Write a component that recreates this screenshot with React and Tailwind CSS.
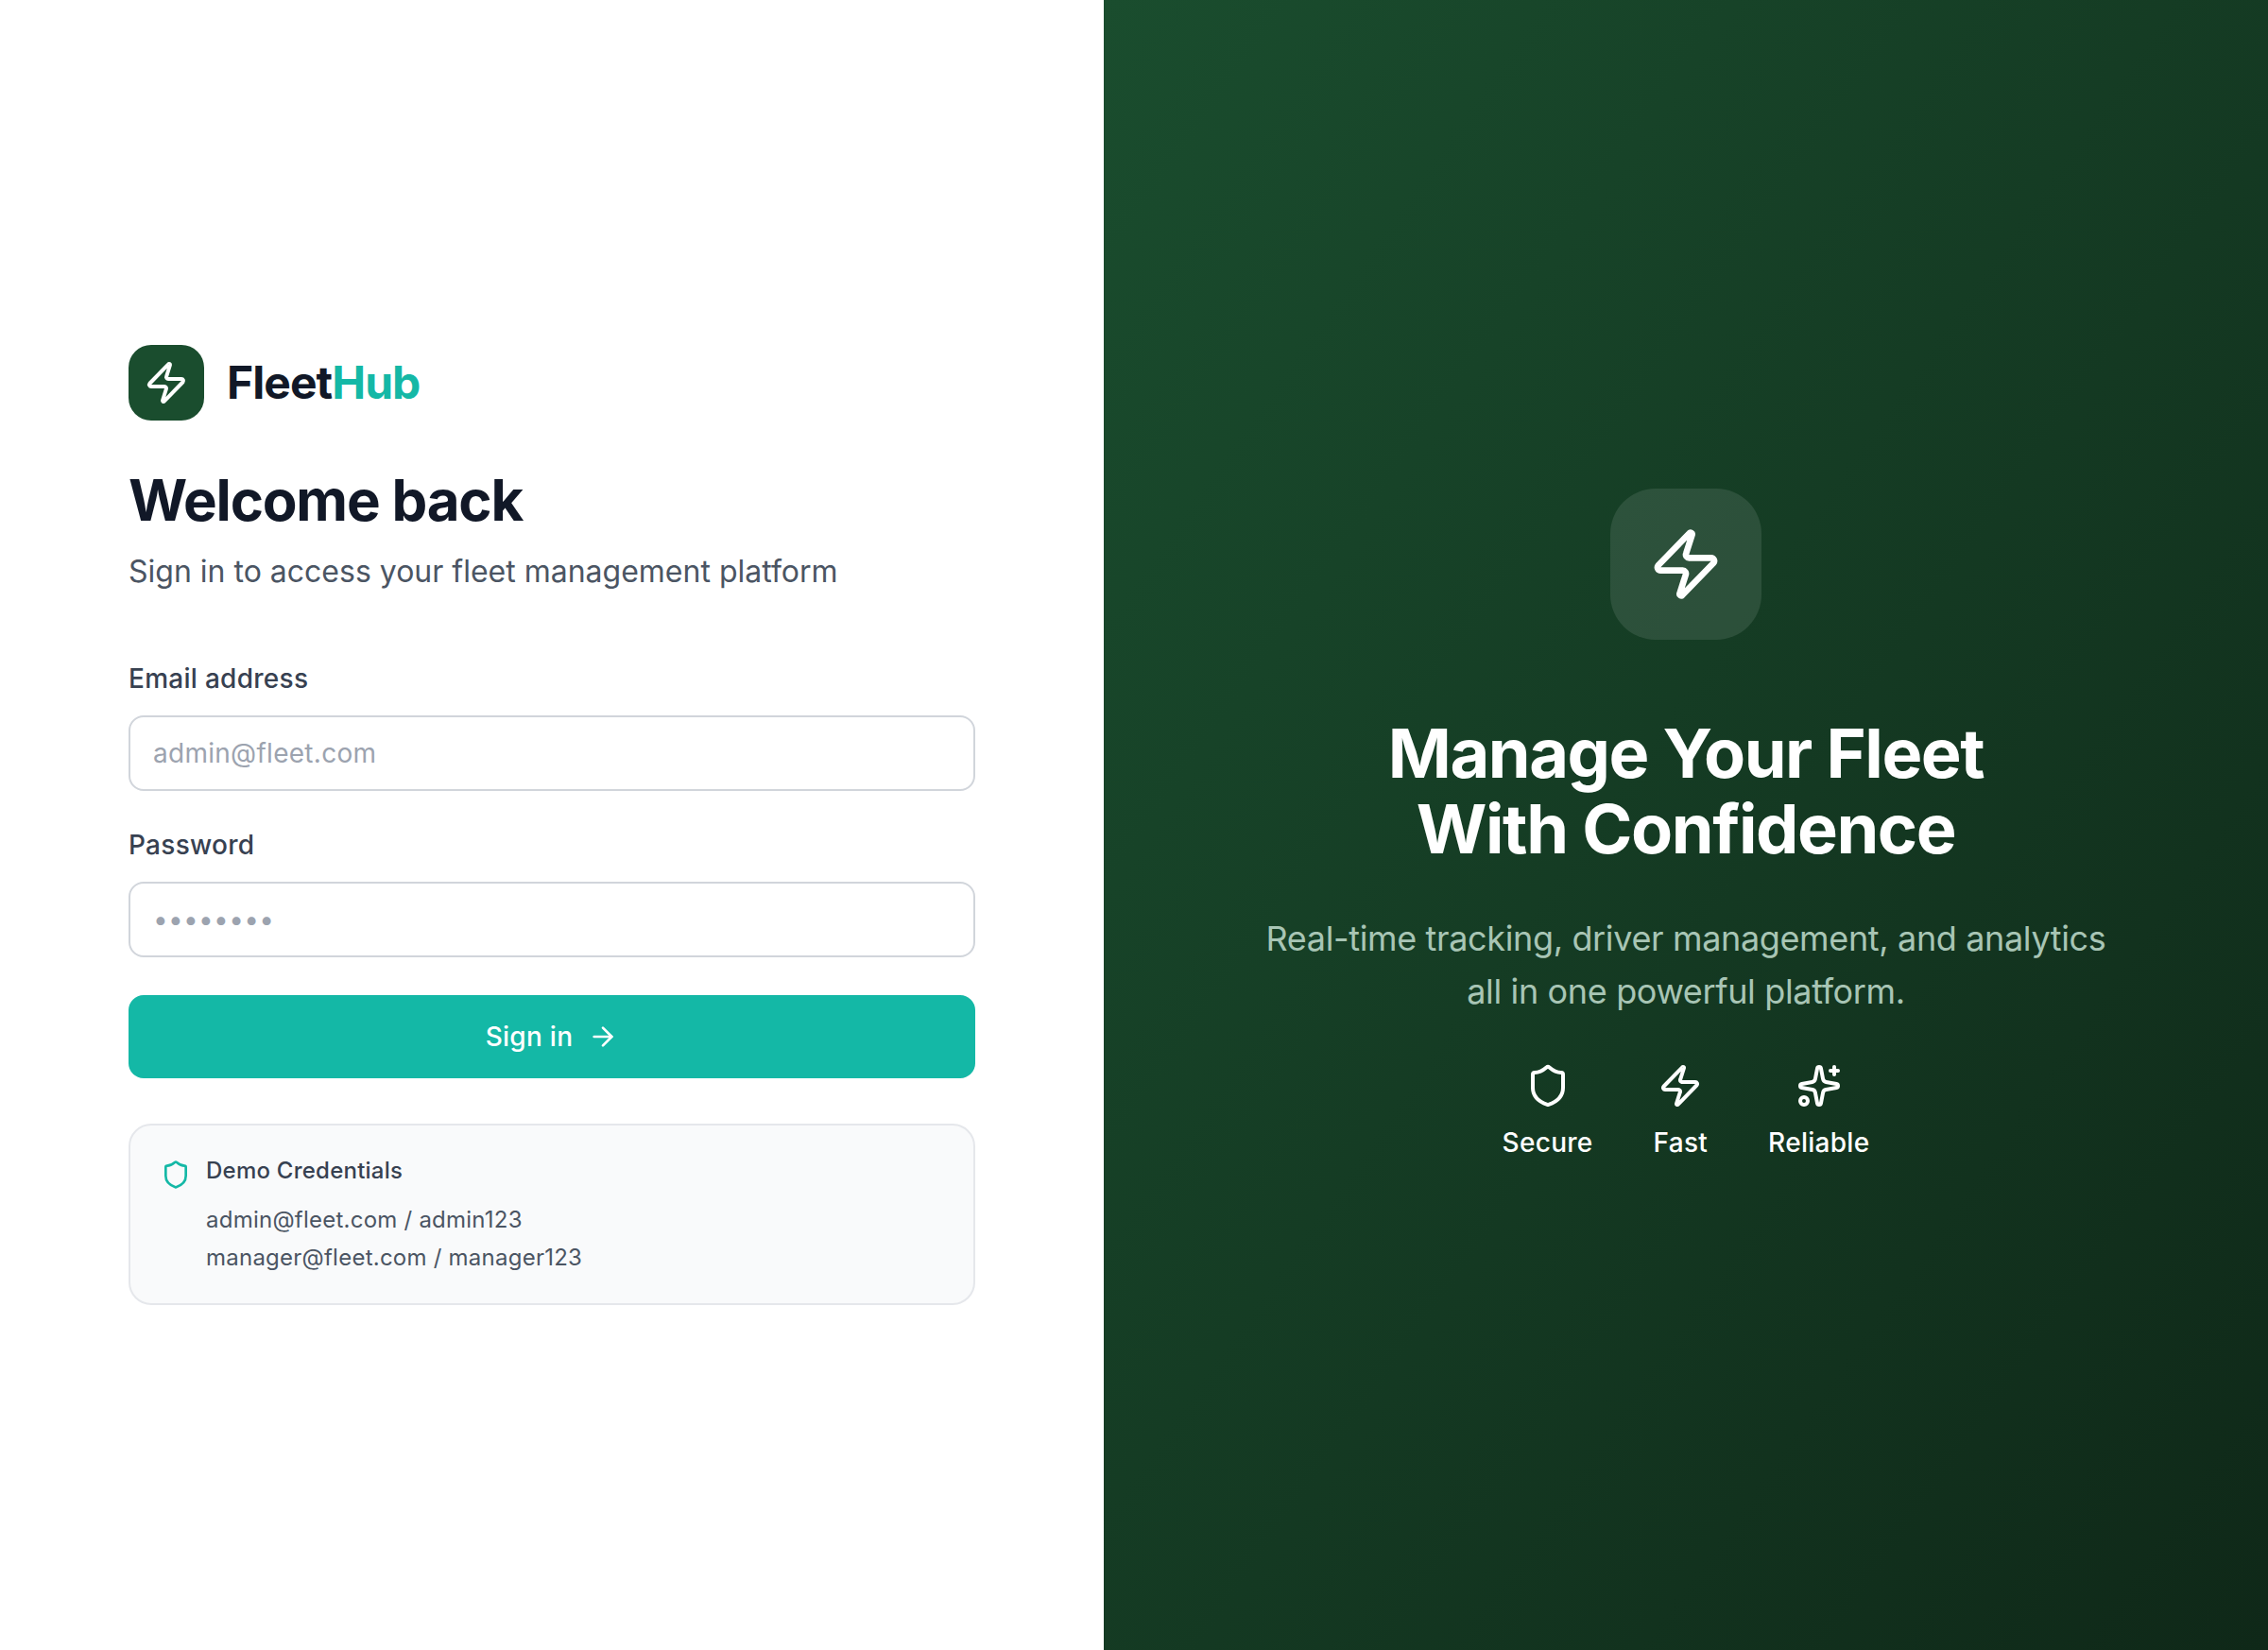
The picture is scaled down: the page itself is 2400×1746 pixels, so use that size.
import { ArrowRight, Shield, Sparkles, Zap } from "lucide-react";

const credentials = ["admin@fleet.com / admin123", "manager@fleet.com / manager123"];

const features = [
  { icon: Shield, label: "Secure" },
  { icon: Zap, label: "Fast" },
  { icon: Sparkles, label: "Reliable" },
];

function Field({ label, type, placeholder }) {
  return (
    <label className="flex flex-col">
      <span className="mb-[22px] text-[28px] leading-[34px] font-medium tracking-[0.01em] text-[#374151]">{label}</span>
      <input
        type={type}
        placeholder={placeholder}
        className="h-20 w-full rounded-2xl border-2 border-[#d1d5db] bg-white px-6 text-[28px] tracking-[0.01em] text-[#111827] outline-none placeholder:text-[#9ca3af]"
      />
    </label>
  );
}

function LoginPanel() {
  return (
    <section className="flex w-[1168px] shrink-0 flex-col justify-center bg-white px-[136px]">
      <div className="flex items-center gap-6">
        <div className="flex size-20 items-center justify-center rounded-3xl bg-[#1a4d2e] text-white">
          <Zap size={48} />
        </div>
        <span className="text-5xl font-bold tracking-[-0.02em] text-[#111827]">
          Fleet<span className="text-[#14b8a6]">Hub</span>
        </span>
      </div>

      <h1 className="mt-12 text-6xl leading-[72px] font-bold tracking-[-0.02em] text-[#111827]">Welcome back</h1>
      <p className="mt-4 text-[32px] leading-[48px] text-[#4b5563]">Sign in to access your fleet management platform</p>

      <form className="mt-[72px] flex flex-col gap-10">
        <Field label="Email address" type="email" placeholder="admin@fleet.com" />
        <Field label="Password" type="password" placeholder="••••••••" />
        <button
          type="button"
          className="flex h-[88px] items-center justify-center gap-4 rounded-2xl bg-[#14b8a6] text-[28px] font-medium tracking-[0.01em] text-white"
        >
          Sign in
          <ArrowRight size={32} />
        </button>
      </form>

      <div className="mt-12 flex items-start gap-4 rounded-3xl border-2 border-[#e5e7eb] bg-[#f9fafb] p-8">
        <Shield size={32} className="mt-1 shrink-0 text-[#14b8a6]" />
        <div className="flex flex-col gap-2 text-2xl leading-8 tracking-[0.01em] text-[#4b5563]">
          <p className="mb-3 font-medium text-[#374151]">Demo Credentials</p>
          {credentials.map((line) => (
            <p key={line}>{line}</p>
          ))}
        </div>
      </div>
    </section>
  );
}

function HeroPanel() {
  return (
    <section className="flex flex-1 flex-col items-center justify-center bg-[linear-gradient(to_bottom_right,#1a4d2e,#0f2818)] text-center text-white">
      <div className="flex size-40 items-center justify-center rounded-[48px] bg-white/10">
        <Zap size={80} />
      </div>
      <h2 className="mt-20 text-7xl leading-[80px] font-bold tracking-[-0.02em]">
        Manage Your Fleet
        <br />
        With Confidence
      </h2>
      <p className="mt-12 text-4xl leading-[56px] tracking-[-0.01em] text-[#a8c5b5]">
        Real-time tracking, driver management, and analytics
        <br />
        all in one powerful platform.
      </p>
      <div className="mt-12 flex gap-16">
        {features.map(({ icon: Icon, label }) => (
          <div key={label} className="flex flex-col items-center gap-4">
            <Icon size={48} />
            <span className="text-[28px] leading-10 font-medium tracking-[0.01em]">{label}</span>
          </div>
        ))}
      </div>
    </section>
  );
}

export default function App() {
  return (
    <main className="flex h-screen w-full overflow-hidden font-['Inter',sans-serif]">
      <LoginPanel />
      <HeroPanel />
    </main>
  );
}
